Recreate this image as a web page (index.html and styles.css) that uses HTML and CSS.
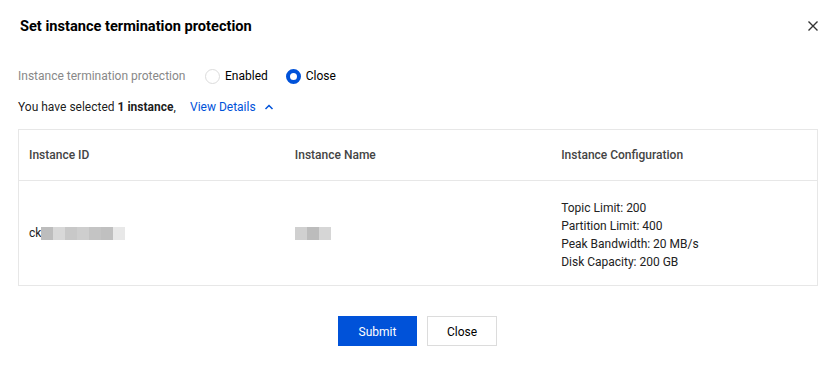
FILE: index.html
```html
<!DOCTYPE html>
<html lang="en">
<head>
    <meta charset="UTF-8">
    <title>Set instance termination protection</title>
    <link rel="stylesheet" href="styles.css">
</head>
<body>
    <div class="dialog">
        <div class="dialog-header">
            <h3>Set instance termination protection</h3>
            <span class="close-icon">
                <svg width="12" height="12" viewBox="0 0 12 12"><path d="M1.5 1.5L10.5 10.5M10.5 1.5L1.5 10.5" stroke="#333" stroke-width="1.4"/></svg>
            </span>
        </div>
        <div class="form-row">
            <span class="form-label">Instance termination protection</span>
            <label class="radio"><span class="radio-dot"></span>Enabled</label>
            <label class="radio checked"><span class="radio-dot"></span>Close</label>
        </div>
        <div class="selected-row">
            <span class="selected-text">You have selected <b>1 instance</b>,</span>
            <a class="details-link">View Details
                <svg width="10" height="10" viewBox="0 0 10 10"><path d="M1.5 7L5 3.5L8.5 7" fill="none" stroke="#0052d9" stroke-width="1.5"/></svg>
            </a>
        </div>
        <table class="instance-table">
            <thead>
                <tr>
                    <th>Instance ID</th>
                    <th>Instance Name</th>
                    <th>Instance Configuration</th>
                </tr>
            </thead>
            <tbody>
                <tr>
                    <td>
                        <span class="masked">ck<i class="b1"></i><i class="b2"></i><i class="b3"></i><i class="b4"></i><i class="b5"></i><i class="b6"></i><i class="b7"></i></span>
                    </td>
                    <td>
                        <span class="masked"><i class="b8"></i><i class="b9"></i><i class="b10"></i></span>
                    </td>
                    <td class="config">
                        <div>Topic Limit: 200</div>
                        <div>Partition Limit: 400</div>
                        <div>Peak Bandwidth: 20 MB/s</div>
                        <div>Disk Capacity: 200 GB</div>
                    </td>
                </tr>
            </tbody>
        </table>
        <div class="dialog-footer">
            <button class="btn btn-primary">Submit</button>
            <button class="btn">Close</button>
        </div>
    </div>
</body>
</html>
```

FILE: styles.css
```css
body {
    margin: 0;
    background: #fff;
    font-family: Roboto, "Liberation Sans", sans-serif;
    font-size: 12px;
    color: rgba(0,0,0,0.9);
}

.dialog {
    width: 835px;
    height: 366px;
    box-sizing: border-box;
    padding: 14px 18px 0 18px;
}

.dialog-header {
    display: flex;
    justify-content: space-between;
    align-items: center;
    height: 24px;
    margin-bottom: 28px;
}

.dialog-header h3 {
    margin: 0 0 0 2px;
    font-size: 14.6px;
    font-weight: 700;
    color: #000;
}

.close-icon {
    display: flex;
    margin-right: -2px;
}

.form-row {
    display: flex;
    align-items: center;
    height: 20px;
}

.form-label {
    color: #888;
    width: 187px;
}

.radio {
    display: flex;
    align-items: center;
    margin-right: 18px;
    color: #000;
}

.radio-dot {
    width: 15px;
    height: 15px;
    border: 1px solid #dcdcdc;
    border-radius: 50%;
    margin-right: 5px;
    box-sizing: border-box;
}

.radio.checked .radio-dot {
    border: 4px solid #0052d9;
}

.selected-row {
    display: flex;
    align-items: center;
    height: 20px;
    margin-top: 11px;
    margin-bottom: 12px;
}

.selected-text {
    width: 172px;
}

.selected-row b {
    font-weight: 700;
}

.details-link {
    color: #0052d9;
    display: flex;
    align-items: center;
    gap: 8px;
}

.instance-table {
    width: 800px;
    border-collapse: collapse;
    border: 1px solid #e7e7e7;
    table-layout: fixed;
}

.instance-table th {
    text-align: left;
    font-weight: 500;
    color: #444;
    height: 50px;
    padding: 0 10px;
    border-bottom: 1px solid #e7e7e7;
}

.instance-table td {
    height: 101px;
    padding: 0 10px;
    line-height: 18px;
    color: #222;
    vertical-align: middle;
}

.instance-table td.config {
    padding-top: 3px;
}

.masked {
    display: flex;
    align-items: center;
}

.masked i {
    display: inline-block;
    width: 12px;
    height: 13px;
}

.b1 { background: #bdbdbd; }
.b2 { background: #d8d8d8; }
.b3 { background: #c8c8c8; }
.b4 { background: #cecece; }
.b5 { background: #c4c4c4; }
.b6 { background: #c0c0c0; }
.b7 { background: #e8e8e8; }
.b8 { background: #d0d0d0; }
.b9 { background: #bcbcbc; }
.b10 { background: #d6d6d6; }

.dialog-footer {
    display: flex;
    justify-content: center;
    gap: 10px;
    margin-top: 30px;
}

.btn {
    height: 30px;
    min-width: 70px;
    padding: 1px 16px 0;
    font-family: inherit;
    font-size: 12px;
    background: #fff;
    color: #000;
    border: 1px solid #dcdcdc;
    cursor: pointer;
}

.btn-primary {
    background: #0052d9;
    border-color: #0052d9;
    color: #fff;
    min-width: 79px;
}
```
